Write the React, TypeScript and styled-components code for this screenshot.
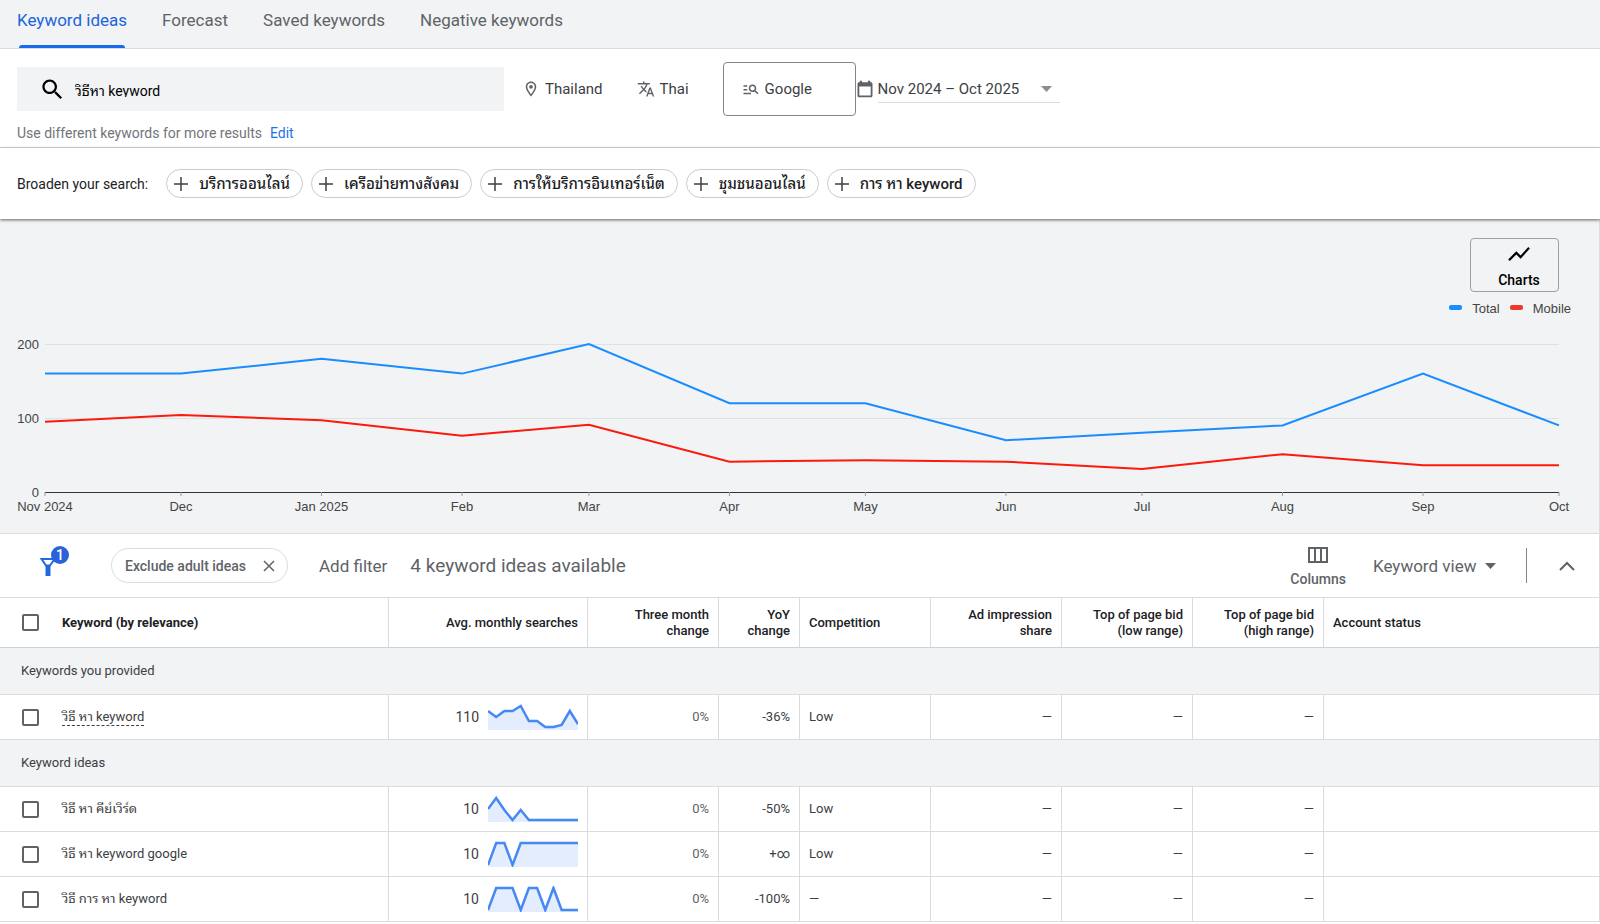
import React from "react";
import styled, { createGlobalStyle } from "styled-components";

const GlobalStyle = createGlobalStyle`
  *, *::before, *::after { box-sizing: border-box; }
  body { margin: 0; background: #fff; color: #3c4043; font-family: Roboto, "Noto Sans Thai Looped", Garuda, Loma, Waree, sans-serif; font-size: 14px; }
  button, input, select { font: inherit; color: inherit; margin: 0; }
  button { background: none; border: 0; padding: 0; cursor: pointer; }
  svg { display: block; flex: none; }
`;

const Tabs = styled.nav`
  display: flex;
  gap: 35px;
  height: 49px;
  padding: 0 17px;
  background: #f1f3f4;
  border-bottom: 1px solid #dadce0;
`;

const Tab = styled.a<{ $active?: boolean }>`
  position: relative;
  padding-top: 8px;
  font-size: 17px;
  line-height: 24px;
  text-decoration: none;
  color: ${(p) => (p.$active ? "#1a65dc" : "#5f6368")};
  ${(p) =>
    p.$active &&
    `&::after { content: ""; position: absolute; left: 2px; right: 2px; bottom: 0; height: 3px; border-radius: 3px 3px 0 0; background: #1a6be8; }`}
`;

const SearchPanel = styled.section`
  padding: 13px 17px 0;
  border-bottom: 1px solid #dadce0;
`;

const SearchRow = styled.div`
  display: flex;
  align-items: center;
`;

const SearchField = styled.label`
  display: flex;
  align-items: center;
  gap: 9px;
  flex: 0 1 487px;
  height: 44px;
  padding-left: 22px;
  background: #f1f3f4;
  color: #000;
`;

const SearchInput = styled.input`
  flex: 1;
  min-width: 0;
  border: 0;
  padding: 0;
  outline: 0;
  background: none;
`;

const SettingButton = styled.button<{ $gap: number; $boxed?: boolean }>`
  display: flex;
  align-items: center;
  gap: 5px;
  margin-left: ${(p) => p.$gap}px;
  font-size: 15px;
  svg { color: #5f6368; }
  ${(p) =>
    p.$boxed &&
    `width: 133px; height: 54px; padding-left: 18px; border: 1px solid #80868b; border-radius: 4px;`}
`;

const DateRange = styled.label`
  display: flex;
  align-items: center;
  gap: 4px;
  svg { color: #5f6368; }
`;

const SelectWrap = styled.span<{ $underline?: boolean }>`
  position: relative;
  display: flex;
  align-items: center;
  border-bottom: ${(p) => (p.$underline ? "1px solid #dadce0" : "0")};
`;

const Select = styled.select<{ $width: number; $size: number }>`
  appearance: none;
  width: ${(p) => p.$width}px;
  height: 26px;
  border: 0;
  padding: 0;
  background: none;
  font-size: ${(p) => p.$size}px;
`;

const SelectArrow = styled.svg<{ $right: number }>`
  position: absolute;
  right: ${(p) => p.$right}px;
  top: 50%;
  margin-top: -3px;
  pointer-events: none;
`;

const Hint = styled.p`
  display: flex;
  gap: 8px;
  margin: 0;
  padding: 7px 0 4px;
  font-size: 14px;
  line-height: 20px;
  color: #70757a;
  a { color: #1a73e8; text-decoration: none; }
`;

const BroadenRow = styled.section`
  position: relative;
  display: flex;
  align-items: center;
  flex-wrap: wrap;
  gap: 8px;
  min-height: 71px;
  padding: 0 17px;
  color: #202124;
  box-shadow: 0 1px 3px rgba(0, 0, 0, 0.6);
`;

const BroadenLabel = styled.span`
  margin-right: 10px;
`;

const Chip = styled.button`
  display: flex;
  align-items: center;
  gap: 11px;
  height: 29px;
  padding: 0 12px 0 7px;
  border: 1px solid #c8ccd0;
  border-radius: 15px;
  font-size: 15px;
  line-height: 20px;
  font-weight: 500;
  color: #202124;
`;

const ChartSection = styled.section`
  display: flex;
  flex-direction: column;
  padding: 19px 40px 0 45px;
  height: 315px;
  background: #f1f3f4;
  border-right: 1px solid #dadce0;
  border-bottom: 1px solid #dadce0;
`;

const ChartsButton = styled.button`
  align-self: flex-end;
  display: flex;
  flex-direction: column;
  align-items: center;
  gap: 5px;
  width: 89px;
  height: 54px;
  padding: 2px 0 0 9px;
  border: 1px solid #9aa0a6;
  border-radius: 4px;
  font-size: 14px;
  line-height: 16px;
  font-weight: 500;
  color: #000;
`;

const Legend = styled.ul`
  align-self: flex-end;
  display: flex;
  gap: 10px;
  list-style: none;
  margin: 8px -12px 0 0;
  padding: 0;
  font: 13px/18px "Liberation Sans", sans-serif;
  color: #444;
`;

const LegendItem = styled.li<{ $color: string }>`
  display: flex;
  align-items: center;
  gap: 10px;
  &::before { content: ""; width: 13px; height: 5px; margin-bottom: 3px; border-radius: 2px; background: ${(p) => p.$color}; }
`;

const Plot = styled.svg`
  width: 100%;
  height: 180px;
  margin-top: 26px;
  overflow: visible;
  font: 13px "Liberation Sans", sans-serif;
  fill: #444;
`;

const Toolbar = styled.section`
  display: flex;
  align-items: center;
  height: 63px;
  padding: 0 24px 0 39px;
  color: #5f6368;
  border-right: 1px solid #dadce0;
`;

const FilterButton = styled.button`
  position: relative;
  width: 30px;
  height: 30px;
  color: #2468e0;
`;

const Badge = styled.span`
  position: absolute;
  left: 12px;
  top: -5px;
  width: 18px;
  height: 18px;
  border-radius: 50%;
  background: #2962d9;
  color: #fff;
  font-size: 14px;
  line-height: 18px;
  font-weight: 500;
  text-align: center;
`;

const FilterChip = styled.button`
  display: flex;
  align-items: center;
  gap: 17px;
  height: 35px;
  margin-left: 42px;
  padding: 0 12px 0 13px;
  border: 1px solid #dadce0;
  border-radius: 18px;
  font-weight: 500;
`;

const AddFilter = styled.button`
  margin-left: 31px;
  font-size: 17px;
  line-height: 20px;
`;

const Summary = styled.span`
  margin-left: 23px;
  font-size: 19px;
  line-height: 22px;
`;

const ToolbarEnd = styled.div`
  display: flex;
  align-items: center;
  margin-left: auto;
`;

const ColumnsButton = styled.button`
  display: flex;
  flex-direction: column;
  align-items: center;
  gap: 8px;
  margin-right: 27px;
  padding-top: 4px;
  font-size: 14px;
  line-height: 17px;
  font-weight: 500;
`;

const Divider = styled.span`
  width: 1px;
  height: 35px;
  margin: 0 32px 0 30px;
  background: #80868b;
`;

const Table = styled.table`
  width: 100%;
  table-layout: fixed;
  border-collapse: separate;
  border-spacing: 0;
  border-top: 1px solid #dadce0;
  font-size: 13px;
  line-height: 16px;
`;

const HeadCell = styled.th<{ $left?: boolean; $bold?: boolean }>`
  height: 50px;
  padding: 0 9px;
  text-align: ${(p) => (p.$left ? "left" : "right")};
  font-weight: ${(p) => (p.$bold ? 700 : 500)};
  color: #202124;
  border-right: 1px solid #dadce0;
  border-bottom: 1px solid #cdd0d4;
`;

const SectionCell = styled.th`
  height: 47px;
  padding: 0 21px;
  text-align: left;
  font-weight: 400;
  background: #f1f3f4;
  border-right: 1px solid #dadce0;
  border-bottom: 1px solid #dadce0;
`;

const Cell = styled.td<{ $left?: boolean }>`
  height: 45px;
  padding: 0 9px;
  text-align: ${(p) => (p.$left ? "left" : "right")};
  border-right: 1px solid #dadce0;
  border-bottom: 1px solid #dadce0;
`;

const Percent = styled.span`
  color: #5f6368;
`;

const KeywordLabel = styled.label`
  display: flex;
  align-items: center;
  gap: 23px;
  padding-left: 13px;
`;

const Checkbox = styled.input`
  appearance: none;
  flex: none;
  width: 17px;
  height: 17px;
  border: 2px solid #5f6368;
  border-radius: 2px;
  background: #fff;
`;

const KeywordText = styled.span<{ $dashed?: boolean }>`
  border-bottom: ${(p) => (p.$dashed ? "1px dashed #3c4043" : "0")};
`;

const Searches = styled.div`
  display: flex;
  align-items: center;
  justify-content: flex-end;
  gap: 9px;
  font-size: 14px;
`;

function Icon({ d, size }: { d: string; size: number }) {
  return (
    <svg width={size} height={size} viewBox="0 0 24 24" fill="currentColor" aria-hidden="true">
      <path d={d} />
    </svg>
  );
}

const icons = {
  search:
    "M15.5 14h-.79l-.28-.27C15.41 12.59 16 11.11 16 9.5 16 5.91 13.09 3 9.5 3S3 5.91 3 9.5 5.91 16 9.5 16c1.61 0 3.09-.59 4.23-1.57l.27.28v.79l5 4.99L20.49 19l-4.99-5zm-6 0C7.01 14 5 11.99 5 9.5S7.01 5 9.5 5 14 7.01 14 9.5 11.99 14 9.5 14z",
  pin: "M12 2C8.13 2 5 5.13 5 9c0 5.25 7 13 7 13s7-7.75 7-13c0-3.87-3.13-7-7-7zM7 9c0-2.76 2.24-5 5-5s5 2.24 5 5c0 2.88-2.88 7.19-5 9.88C9.92 16.21 7 11.85 7 9zm5-2.5a2.5 2.5 0 1 0 0 5 2.5 2.5 0 0 0 0-5z",
  translate:
    "M12.87 15.07l-2.54-2.51.03-.03c1.74-1.94 2.98-4.17 3.71-6.53H17V4h-7V2H8v2H1v1.99h11.17C11.5 7.92 10.44 9.75 9 11.35 8.07 10.32 7.3 9.19 6.69 8h-2c.73 1.63 1.73 3.17 2.98 4.56l-5.09 5.02L4 19l5-5 3.11 3.11.76-2.04zM18.5 10h-2L12 22h2l1.12-3h4.75L21 22h2l-4.5-12zm-2.62 7l1.62-4.33L19.12 17h-3.24z",
  network:
    "M7 9H2V7h5v2zm0 3H2v2h5v-2zm13.59 7l-3.83-3.83c-.8.52-1.74.83-2.76.83-2.76 0-5-2.24-5-5s2.24-5 5-5 5 2.24 5 5c0 1.02-.31 1.96-.83 2.75L22 17.59 20.59 19zM17 11c0-1.65-1.35-3-3-3s-3 1.35-3 3 1.35 3 3 3 3-1.35 3-3zM2 19h10v-2H2v2z",
  calendar:
    "M20 3h-1V1h-3v2H8V1H5v2H4c-1.1 0-2 .9-2 2v16c0 1.1.9 2 2 2h16c1.1 0 2-.9 2-2V5c0-1.1-.9-2-2-2zm-.4 17.6H4.4V8.5h15.2v12.1z",
  chart: "M3.5 18.49l6-6.01 4 4L22 6.92l-1.41-1.41-7.09 7.97-4-4L2 16.99z",
};

const broaden = ["บริการออนไลน์", "เครือข่ายทางสังคม", "การให้บริการอินเทอร์เน็ต", "ชุมชนออนไลน์", "การ หา keyword"];

const months = [
  { label: "Nov 2024", day: 0, total: 160, mobile: 95 },
  { label: "Dec", day: 30, total: 160, mobile: 104 },
  { label: "Jan 2025", day: 61, total: 180, mobile: 97 },
  { label: "Feb", day: 92, total: 160, mobile: 76 },
  { label: "Mar", day: 120, total: 200, mobile: 91 },
  { label: "Apr", day: 151, total: 120, mobile: 41 },
  { label: "May", day: 181, total: 120, mobile: 43 },
  { label: "Jun", day: 212, total: 70, mobile: 41 },
  { label: "Jul", day: 242, total: 80, mobile: 31 },
  { label: "Aug", day: 273, total: 90, mobile: 51 },
  { label: "Sep", day: 304, total: 160, mobile: 36 },
  { label: "Oct", day: 334, total: 90, mobile: 36 },
];
const lastDay = 334;
const plotHeight = 148;
const toY = (value: number) => plotHeight * (1 - value / 200);

function TrendChart() {
  const line = (key: "total" | "mobile") => months.map((m) => `${m.day},${toY(m[key])}`).join(" ");
  return (
    <Plot role="img" aria-label="Search volume trends">
      {[200, 100, 0].map((v) => (
        <g key={v}>
          <line x1="0" x2="100%" y1={toY(v) + 0.5} y2={toY(v) + 0.5} stroke={v ? "#dfe1e3" : "#333"} />
          <text x="-6" y={toY(v) + 5} textAnchor="end">{v}</text>
        </g>
      ))}
      {months.map((m) => {
        const x = `${(m.day / lastDay) * 100}%`;
        return (
          <g key={m.label}>
            <line x1={x} x2={x} y1={plotHeight} y2={plotHeight + 4} stroke="#999" />
            <text x={x} y={plotHeight + 19} textAnchor="middle">{m.label}</text>
          </g>
        );
      })}
      <svg width="100%" height={plotHeight} viewBox={`0 0 ${lastDay} ${plotHeight}`} preserveAspectRatio="none" overflow="visible" fill="none" strokeWidth="2">
        <polyline points={line("total")} stroke="#1a8cff" vectorEffect="non-scaling-stroke" />
        <polyline points={line("mobile")} stroke="#fb1a0e" vectorEffect="non-scaling-stroke" />
      </svg>
    </Plot>
  );
}

function Sparkline({ values }: { values: number[] }) {
  const points = values.map((v, i) => `${(i * 90) / (values.length - 1)},${v}`).join(" ");
  return (
    <svg width="90" height="26" viewBox="0 0 90 26" aria-hidden="true">
      <polygon points={`${points} 90,26 0,26`} fill="#e3edfe" />
      <polyline points={points} fill="none" stroke="#4688f4" strokeWidth="2.5" />
    </svg>
  );
}

interface Keyword {
  text: string;
  searches: number;
  trend: number[];
  yoy: string;
  competition: string;
  dashed?: boolean;
}

const provided: Keyword[] = [
  { text: "วิธี หา keyword", searches: 110, trend: [7, 13, 7, 7, 2, 17, 17, 23, 23, 21, 7, 20], yoy: "-36%", competition: "Low", dashed: true },
];
const ideas: Keyword[] = [
  { text: "วิธี หา คีย์เวิร์ด", searches: 10, trend: [13, 2, 14, 24, 14, 24, 24, 24, 24, 24, 24, 24], yoy: "-50%", competition: "Low" },
  { text: "วิธี หา keyword google", searches: 10, trend: [24, 2, 2, 24, 2, 2, 2, 2, 2, 2, 2, 2], yoy: "+∞", competition: "Low" },
  { text: "วิธี การ หา keyword", searches: 10, trend: [24, 2, 2, 2, 24, 2, 2, 24, 2, 24, 24, 24], yoy: "-100%", competition: "—" },
];

function KeywordRow({ item }: { item: Keyword }) {
  return (
    <tr>
      <Cell $left>
        <KeywordLabel>
          <Checkbox type="checkbox" />
          <KeywordText $dashed={item.dashed}>{item.text}</KeywordText>
        </KeywordLabel>
      </Cell>
      <Cell>
        <Searches>
          {item.searches}
          <Sparkline values={item.trend} />
        </Searches>
      </Cell>
      <Cell><Percent>0%</Percent></Cell>
      <Cell>{item.yoy}</Cell>
      <Cell $left>{item.competition}</Cell>
      <Cell>—</Cell>
      <Cell>—</Cell>
      <Cell>—</Cell>
      <Cell />
    </tr>
  );
}

const columnWidths = [389, 199, 131, 81, 131, 131, 131, 131];

export default function App() {
  return (
    <>
      <GlobalStyle />
      <Tabs>
        <Tab href="#ideas" $active>Keyword ideas</Tab>
        <Tab href="#forecast">Forecast</Tab>
        <Tab href="#saved">Saved keywords</Tab>
        <Tab href="#negative">Negative keywords</Tab>
      </Tabs>

      <SearchPanel>
        <SearchRow>
          <SearchField>
            <Icon d={icons.search} size={27} />
            <SearchInput aria-label="Keywords" defaultValue="วิธีหา keyword" />
          </SearchField>
          <SettingButton $gap={18}><Icon d={icons.pin} size={18} />Thailand</SettingButton>
          <SettingButton $gap={34}><Icon d={icons.translate} size={18} />Thai</SettingButton>
          <SettingButton $gap={34} $boxed><Icon d={icons.network} size={18} />Google</SettingButton>
          <DateRange>
            <Icon d={icons.calendar} size={18} />
            <SelectWrap $underline>
              <Select $width={182} $size={15} aria-label="Date range">
                <option>Nov 2024 – Oct 2025</option>
              </Select>
              <SelectArrow $right={8} width="11" height="6" viewBox="0 0 11 6"><path d="M0 0h11L5.5 6z" fill="#8a8d91" /></SelectArrow>
            </SelectWrap>
          </DateRange>
        </SearchRow>
        <Hint>
          Use different keywords for more results <a href="#edit">Edit</a>
        </Hint>
      </SearchPanel>

      <BroadenRow>
        <BroadenLabel>Broaden your search:</BroadenLabel>
        {broaden.map((text) => (
          <Chip key={text}>
            <svg width="14" height="14" viewBox="0 0 14 14" stroke="#3c4043" strokeWidth="1.5" aria-hidden="true"><path d="M7 0v14M0 7h14" /></svg>
            {text}
          </Chip>
        ))}
      </BroadenRow>

      <ChartSection>
        <ChartsButton>
          <Icon d={icons.chart} size={26} />
          Charts
        </ChartsButton>
        <Legend>
          <LegendItem $color="#1a8cff">Total</LegendItem>
          <LegendItem $color="#f0372b">Mobile</LegendItem>
        </Legend>
        <TrendChart />
      </ChartSection>

      <Toolbar>
        <FilterButton aria-label="Filters">
          <svg width="30" height="30" viewBox="0 0 30 30" aria-hidden="true">
            <path d="M2.500 8h13L11 14.500H7z" fill="none" stroke="currentColor" strokeWidth="2" />
            <path d="M6.500 14h5v11h-5z" fill="currentColor" />
          </svg>
          <Badge>1</Badge>
        </FilterButton>
        <FilterChip>
          Exclude adult ideas
          <svg width="12" height="12" viewBox="0 0 12 12" stroke="#5f6368" strokeWidth="1.5" aria-hidden="true"><path d="M1 1l10 10M11 1L1 11" /></svg>
        </FilterChip>
        <AddFilter>Add filter</AddFilter>
        <Summary>4 keyword ideas available</Summary>
        <ToolbarEnd>
          <ColumnsButton>
            <svg width="20" height="16" viewBox="0 0 20 16" fill="none" stroke="#5f6368" strokeWidth="2" aria-hidden="true"><path d="M1 1h18v14H1zM7 1v14M13 1v14" /></svg>
            Columns
          </ColumnsButton>
          <SelectWrap>
            <Select $width={123} $size={17} aria-label="View">
              <option>Keyword view</option>
            </Select>
            <SelectArrow $right={0} width="11" height="6" viewBox="0 0 11 6"><path d="M0 0h11L5.5 6z" fill="#5f6368" /></SelectArrow>
          </SelectWrap>
          <Divider />
          <button aria-label="Collapse">
            <svg width="16" height="10" viewBox="0 0 16 10" fill="none" stroke="#5f6368" strokeWidth="2"><path d="M1 9l7-7 7 7" /></svg>
          </button>
        </ToolbarEnd>
      </Toolbar>

      <Table>
        <colgroup>
          {columnWidths.map((w, i) => <col key={i} width={w} />)}
          <col />
        </colgroup>
        <thead>
          <tr>
            <HeadCell $left $bold>
              <KeywordLabel><Checkbox type="checkbox" />Keyword (by relevance)</KeywordLabel>
            </HeadCell>
            <HeadCell>Avg. monthly searches</HeadCell>
            <HeadCell>Three month<br />change</HeadCell>
            <HeadCell>YoY<br />change</HeadCell>
            <HeadCell $left>Competition</HeadCell>
            <HeadCell>Ad impression<br />share</HeadCell>
            <HeadCell>Top of page bid<br />(low range)</HeadCell>
            <HeadCell>Top of page bid<br />(high range)</HeadCell>
            <HeadCell $left>Account status</HeadCell>
          </tr>
        </thead>
        <tbody>
          <tr><SectionCell colSpan={9}>Keywords you provided</SectionCell></tr>
          {provided.map((k) => <KeywordRow key={k.text} item={k} />)}
          <tr><SectionCell colSpan={9}>Keyword ideas</SectionCell></tr>
          {ideas.map((k) => <KeywordRow key={k.text} item={k} />)}
        </tbody>
      </Table>
    </>
  );
}
